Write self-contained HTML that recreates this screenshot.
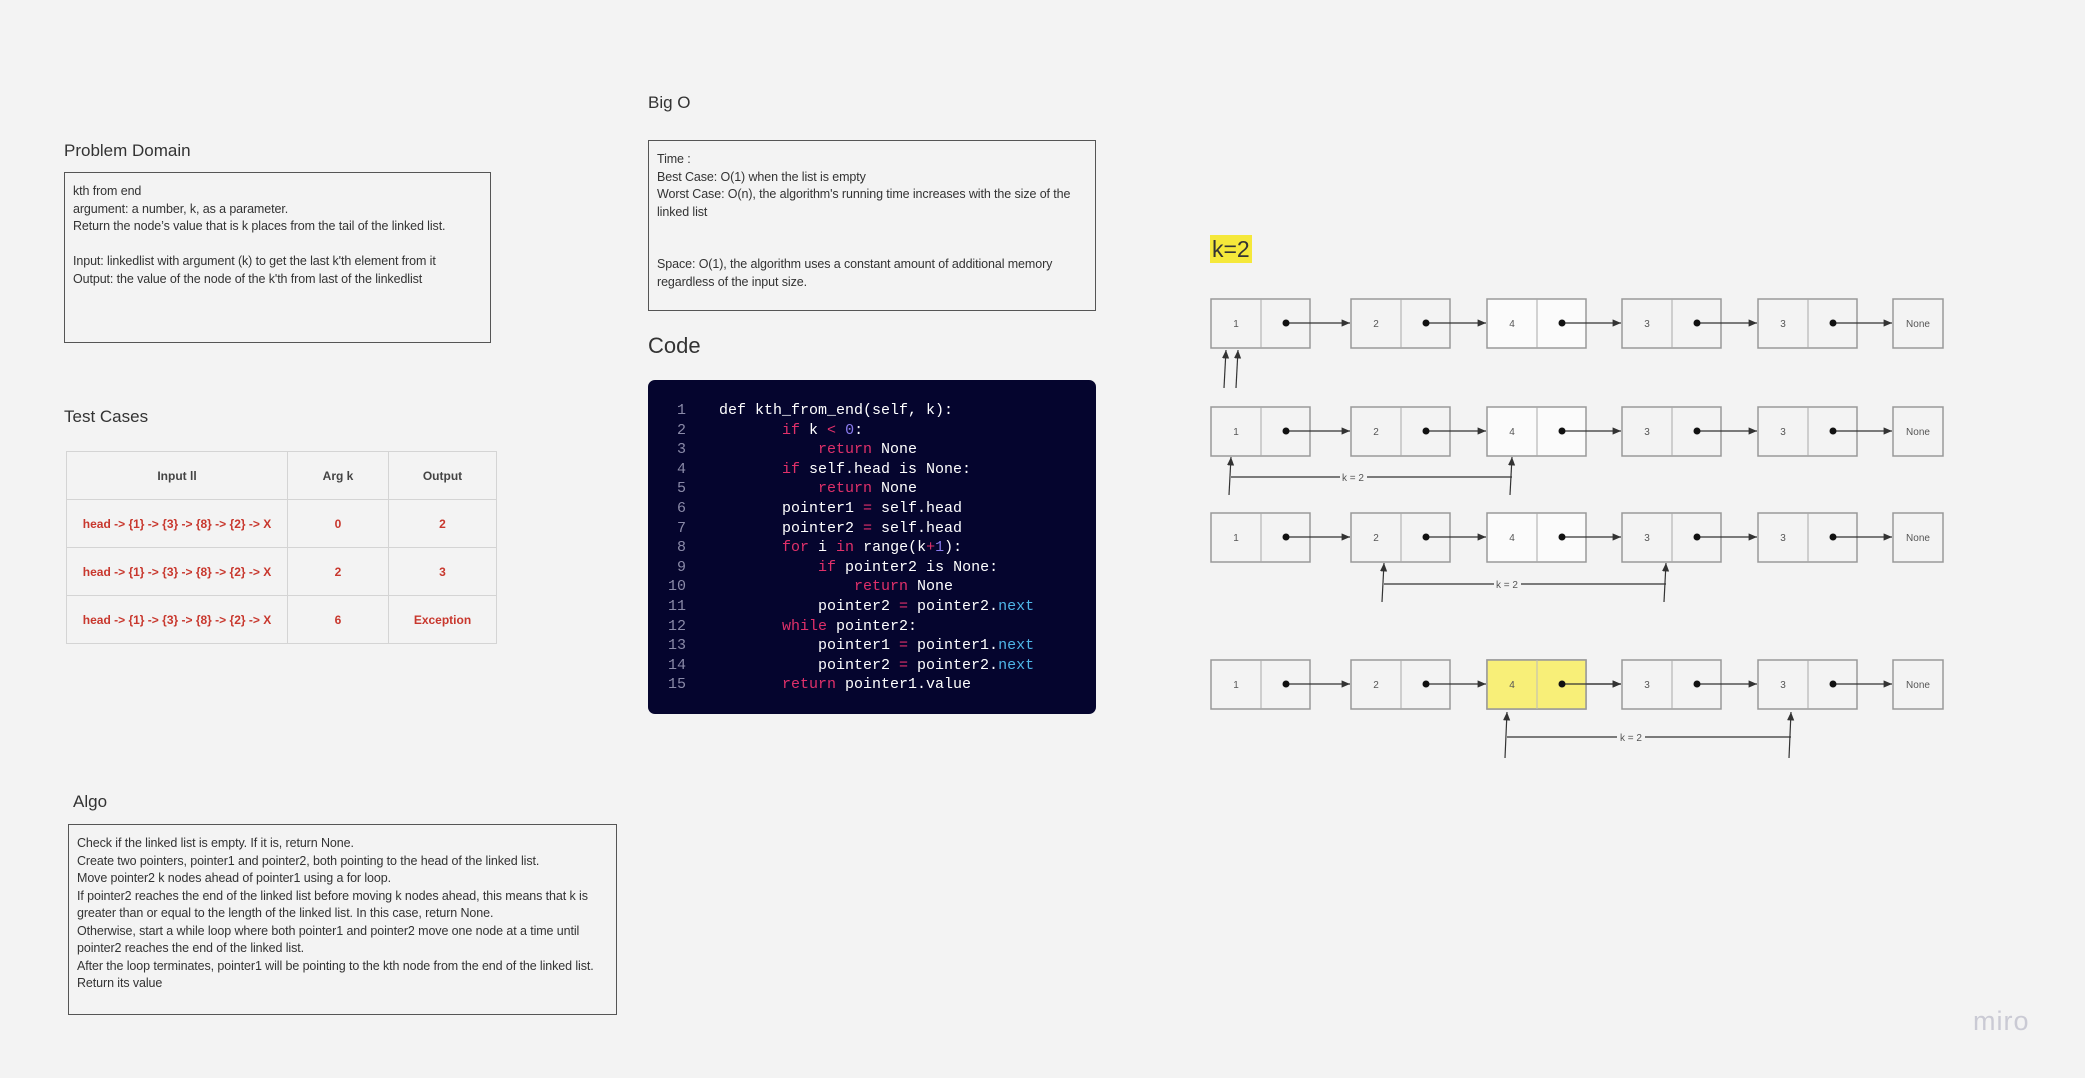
<!DOCTYPE html>
<html><head><meta charset="utf-8"><style>
*{margin:0;padding:0;box-sizing:border-box}
body{width:2085px;height:1078px;background:#f3f3f3;position:relative;overflow:hidden;font-family:"Liberation Sans",sans-serif;color:#333}
.abs{position:absolute}
.t{font-size:17px;color:#333}
.box{position:absolute;border:1.5px solid #555;background:#f3f3f3;font-size:12.5px;line-height:17.5px;color:#333;padding:10px 8px;letter-spacing:-0.1px}
table{border-collapse:collapse;position:absolute;left:66px;top:451px;font-size:12px;font-weight:bold}
td{border:1.5px solid #d4d4d4;text-align:center;height:48px;color:#c8372d}
tr:first-child td{color:#444}
.code{position:absolute;left:648px;top:380px;width:448px;height:334px;background:#05052e;border-radius:7px;font-family:"Liberation Mono",monospace;font-size:15px;color:#fff}
.ln{position:absolute;left:0;width:38px;text-align:right;color:#8a8aa8}
.cl{position:absolute;left:71px;white-space:pre}
.k{color:#e0306a}.n{color:#8b7cf0}.a{color:#4fb6e8}
</style></head><body>
<div class="abs t" style="left:64px;top:141px">Problem Domain</div>
<div class="box" style="left:64px;top:172px;width:427px;height:171px">kth from end<br>argument: a number, k, as a parameter.<br>Return the node’s value that is k places from the tail of the linked list.<br><br>Input: linkedlist with argument (k) to get the last k'th element from it<br>Output: the value of the node of the k'th from last of the linkedlist</div>
<div class="abs t" style="left:64px;top:407px">Test Cases</div>
<table>
<tr><td style="width:221px">Input ll</td><td style="width:101px">Arg k</td><td style="width:108px">Output</td></tr>
<tr><td>head -&gt; {1} -&gt; {3} -&gt; {8} -&gt; {2} -&gt; X</td><td>0</td><td>2</td></tr>
<tr><td>head -&gt; {1} -&gt; {3} -&gt; {8} -&gt; {2} -&gt; X</td><td>2</td><td>3</td></tr>
<tr><td>head -&gt; {1} -&gt; {3} -&gt; {8} -&gt; {2} -&gt; X</td><td>6</td><td>Exception</td></tr>
</table>
<div class="abs t" style="left:73px;top:792px">Algo</div>
<div class="box" style="left:68px;top:824px;width:549px;height:191px;padding:10px 8px">Check if the linked list is empty. If it is, return None.<br>Create two pointers, pointer1 and pointer2, both pointing to the head of the linked list.<br>Move pointer2 k nodes ahead of pointer1 using a for loop.<br>If pointer2 reaches the end of the linked list before moving k nodes ahead, this means that k is greater than or equal to the length of the linked list. In this case, return None.<br>Otherwise, start a while loop where both pointer1 and pointer2 move one node at a time until pointer2 reaches the end of the linked list.<br>After the loop terminates, pointer1 will be pointing to the kth node from the end of the linked list. Return its value</div>
<div class="abs t" style="left:648px;top:93px">Big O</div>
<div class="box" style="left:648px;top:140px;width:448px;height:171px">Time :<br>Best Case: O(1) when the list is empty<br>Worst Case: O(n), the algorithm's running time increases with the size of the linked list<br><br><br>Space: O(1), the algorithm uses a constant amount of additional memory regardless of the input size.</div>
<div class="abs" style="left:648px;top:333px;font-size:22px;color:#333">Code</div>
<div class="code">
<div class="ln" style="top:21px;line-height:19.6px">1<br>2<br>3<br>4<br>5<br>6<br>7<br>8<br>9<br>10<br>11<br>12<br>13<br>14<br>15</div>
<div class="cl" style="top:21px;line-height:19.6px">def kth_from_end(self, k):
       <span class="k">if</span> k <span class="k">&lt;</span> <span class="n">0</span>:
           <span class="k">return</span> None
       <span class="k">if</span> self.head is None:
           <span class="k">return</span> None
       pointer1 <span class="k">=</span> self.head
       pointer2 <span class="k">=</span> self.head
       <span class="k">for</span> i <span class="k">in</span> range(k<span class="k">+</span><span class="n">1</span>):
           <span class="k">if</span> pointer2 is None:
               <span class="k">return</span> None
           pointer2 <span class="k">=</span> pointer2.<span class="a">next</span>
       <span class="k">while</span> pointer2:
           pointer1 <span class="k">=</span> pointer1.<span class="a">next</span>
           pointer2 <span class="k">=</span> pointer2.<span class="a">next</span>
       <span class="k">return</span> pointer1.value</div>
</div>
<div class="abs" style="left:1210px;top:235px;height:28px;padding:0 2px;background:#f5e83a;font-size:23px;line-height:28px;color:#333">k=2</div>
<svg class="abs" style="left:0;top:0" width="2085" height="1078" font-family="Liberation Sans" font-size="10" fill="#555">
<defs><marker id="m" markerWidth="8" markerHeight="8" refX="7" refY="4" orient="auto"><path d="M0,1 L7,4 L0,7 z" fill="#333"/></marker></defs>
<g id="r1">
<rect x="1211" y="299" width="99" height="49" fill="#f3f3f3" stroke="#999" stroke-width="1.5"/><line x1="1261" y1="299" x2="1261" y2="348" stroke="#aaa"/><text x="1236" y="327" text-anchor="middle">1</text>
<rect x="1351" y="299" width="99" height="49" fill="#f3f3f3" stroke="#999" stroke-width="1.5"/><line x1="1401" y1="299" x2="1401" y2="348" stroke="#aaa"/><text x="1376" y="327" text-anchor="middle">2</text>
<rect x="1487" y="299" width="99" height="49" fill="#fbfbfb" stroke="#999" stroke-width="1.5"/><line x1="1537" y1="299" x2="1537" y2="348" stroke="#aaa"/><text x="1512" y="327" text-anchor="middle">4</text>
<rect x="1622" y="299" width="99" height="49" fill="#f3f3f3" stroke="#999" stroke-width="1.5"/><line x1="1672" y1="299" x2="1672" y2="348" stroke="#aaa"/><text x="1647" y="327" text-anchor="middle">3</text>
<rect x="1758" y="299" width="99" height="49" fill="#f3f3f3" stroke="#999" stroke-width="1.5"/><line x1="1808" y1="299" x2="1808" y2="348" stroke="#aaa"/><text x="1783" y="327" text-anchor="middle">3</text>
<rect x="1893" y="299" width="50" height="49" fill="#f3f3f3" stroke="#999" stroke-width="1.5"/><text x="1918" y="327" text-anchor="middle">None</text>
<g stroke="#333" stroke-width="1.2" marker-end="url(#m)">
<line x1="1286" y1="323" x2="1350" y2="323"/><line x1="1426" y1="323" x2="1486" y2="323"/><line x1="1562" y1="323" x2="1621" y2="323"/><line x1="1697" y1="323" x2="1757" y2="323"/><line x1="1833" y1="323" x2="1892" y2="323"/></g>
<g fill="#111"><circle cx="1286" cy="323" r="3.5"/><circle cx="1426" cy="323" r="3.5"/><circle cx="1562" cy="323" r="3.5"/><circle cx="1697" cy="323" r="3.5"/><circle cx="1833" cy="323" r="3.5"/></g>
</g>
<use href="#r1" y="108"/>
<use href="#r1" y="214"/>
<use href="#r1" y="361"/>
<rect x="1487" y="660" width="99" height="49" fill="#f8ef78" stroke="#999" stroke-width="1.5"/><line x1="1537" y1="660" x2="1537" y2="709" stroke="#bbb"/><text x="1512" y="688" text-anchor="middle">4</text>
<line x1="1562" y1="684" x2="1621" y2="684" stroke="#333" stroke-width="1.2" marker-end="url(#m)"/><circle cx="1562" cy="684" r="3.5" fill="#111"/>
<g stroke="#333" stroke-width="1.2">
<line x1="1224" y1="388" x2="1226" y2="350" marker-end="url(#m)"/><line x1="1236" y1="388" x2="1238" y2="350" marker-end="url(#m)"/>
<line x1="1229" y1="495" x2="1231" y2="457" marker-end="url(#m)"/><line x1="1510" y1="495" x2="1512" y2="457" marker-end="url(#m)"/>
<line x1="1231" y1="477" x2="1340" y2="477"/><line x1="1367" y1="477" x2="1512" y2="477"/>
<line x1="1382" y1="602" x2="1384" y2="563" marker-end="url(#m)"/><line x1="1664" y1="602" x2="1666" y2="563" marker-end="url(#m)"/>
<line x1="1384" y1="584" x2="1494" y2="584"/><line x1="1521" y1="584" x2="1666" y2="584"/>
<line x1="1505" y1="758" x2="1507" y2="712" marker-end="url(#m)"/><line x1="1789" y1="758" x2="1791" y2="712" marker-end="url(#m)"/>
<line x1="1507" y1="737" x2="1617" y2="737"/><line x1="1645" y1="737" x2="1791" y2="737"/>
</g>
<text x="1353" y="481" text-anchor="middle">k = 2</text>
<text x="1507" y="588" text-anchor="middle">k = 2</text>
<text x="1631" y="741" text-anchor="middle">k = 2</text>
</svg>
<div class="abs" style="left:1973px;top:1006px;font-size:27px;color:#cacad4;letter-spacing:1px">miro</div>
</body></html>
